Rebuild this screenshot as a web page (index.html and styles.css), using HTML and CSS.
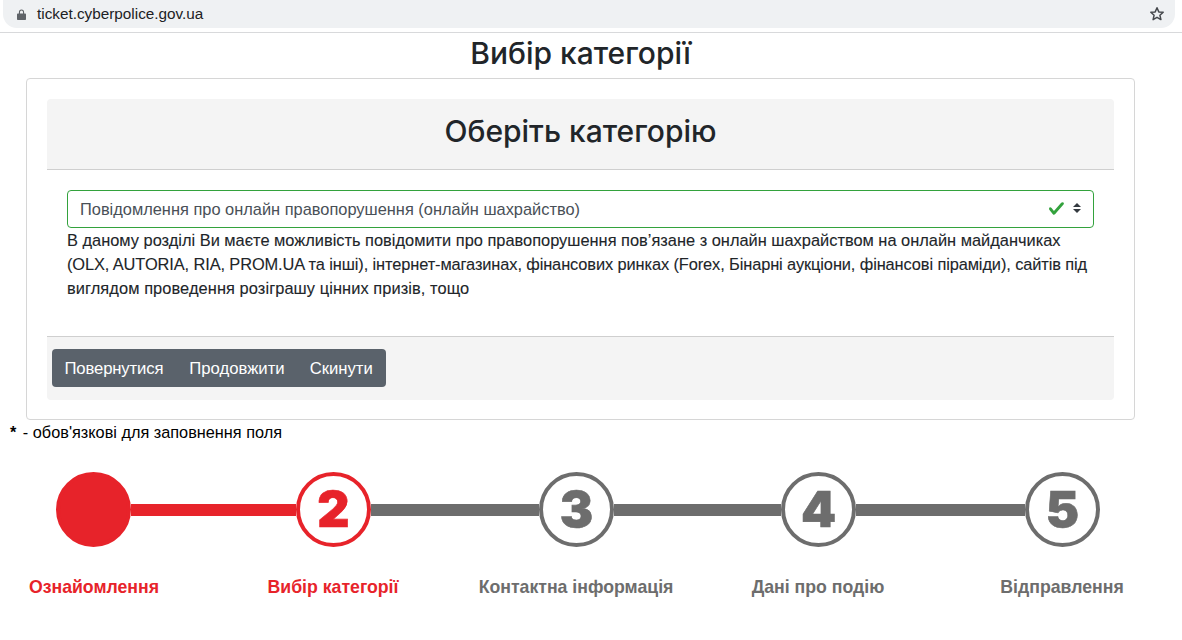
FILE: index.html
```html
<!DOCTYPE html>
<html lang="uk">
<head>
  <meta charset="UTF-8">
  <meta name="viewport" content="width=device-width, initial-scale=1.0">
  <title>Вибір категорії</title>
  <link rel="stylesheet" href="styles.css">
</head>
<body>
  <!-- Browser address bar -->
  <div class="browser-bar">
    <div class="address-pill">
      <svg class="lock-icon" viewBox="0 0 9 11" width="9" height="11">
        <path d="M1.9 4.6V3a2.6 2.6 0 0 1 5.2 0v1.6H8.2a.8.8 0 0 1 .8.8v4.8a.8.8 0 0 1-.8.8H.8a.8.8 0 0 1-.8-.8V5.400a.8.8 0 0 1 .8-.8zM3 4.600h3V3a1.500 1.500 0 0 0-3 0z" fill="#5f6368" fill-rule="evenodd"/>
      </svg>
      <span class="address-text">ticket.cyberpolice.gov.ua</span>
      <svg class="star-icon" viewBox="0 0 16 16" width="16" height="16">
        <path d="M8 1.800l1.800 4.100 4.400.4-3.300 2.900 1 4.400L8 11.300l-3.900 2.300 1-4.400-3.300-2.900 4.400-.4z" fill="none" stroke="#45484c" stroke-width="1.500" stroke-linejoin="round"/>
      </svg>
    </div>
  </div>

  <h2 class="page-title">Вибір категорії</h2>

  <div class="card">
    <div class="card-header">
      <h1>Оберіть категорію</h1>
    </div>
    <div class="card-body">
      <div class="category-select">
        <span class="category-value">Повідомлення про онлайн правопорушення (онлайн шахрайство)</span>
        <svg class="check-icon" viewBox="0 0 8 8" width="17" height="17">
          <path d="M2.3 6.730L.6 4.530c-.4-1.040.46-1.400 1.100-.8l1.100 1.400 3.400-3.800c.6-.63 1.600-.27 1.200.7l-4 4.600c-.43.5-.8.4-1.100.1z" fill="#33a23d"/>
        </svg>
        <svg class="arrows-icon" viewBox="0 0 4 5" width="8" height="10">
          <path d="M2 0L0 2h4zm0 5L0 3h4z" fill="#343a40"/>
        </svg>
      </div>
      <p class="category-text">
        <span class="text-line">В даному розділі Ви маєте можливість повідомити про правопорушення пов’язане з онлайн шахрайством на онлайн майданчиках</span>
        <span class="text-line text-line-tight">(OLX, AUTORIA, RIA, PROM.UA та інші), інтернет-магазинах, фінансових ринках (Forex, Бінарні аукціони, фінансові піраміди), сайтів під</span>
        <span class="text-line text-line-wide">виглядом проведення розіграшу цінних призів, тощо</span>
      </p>
    </div>
    <div class="card-footer">
      <div class="btn-group">
        <button class="btn btn-first">Повернутися</button>
        <button class="btn">Продовжити</button>
        <button class="btn btn-last">Скинути</button>
      </div>
    </div>
  </div>

  <p class="required-note"><b>*</b> - обов'язкові для заповнення поля</p>

  <!-- Progress steps -->
  <div class="steps">
    <div class="step step-done"></div>
    <div class="line line-1 line-active"></div>
    <div class="step step-active">2</div>
    <div class="line line-2"></div>
    <div class="step">3</div>
    <div class="line line-3"></div>
    <div class="step">4</div>
    <div class="line line-4"></div>
    <div class="step">5</div>
  </div>
  <div class="step-labels">
    <div class="label label-active">Ознайомлення</div>
    <div class="label label-active">Вибір категорії</div>
    <div class="label">Контактна інформація</div>
    <div class="label">Дані про подію</div>
    <div class="label">Відправлення</div>
  </div>
</body>
</html>
```

FILE: styles.css
```css
* {
  box-sizing: border-box;
}
body {
  margin: 0;
  font-family: "Liberation Sans", Arial, sans-serif;
  font-size: 16.4px;
  line-height: 24px;
  color: #212529;
  background-color: #fff;
}
.browser-bar {
  height: 33px;
  padding: 0 7px 4px 3px;
  border-bottom: 1px solid #d8d9db;
}
.address-pill {
  display: flex;
  align-items: center;
  height: 28px;
  padding: 0 10px 0 14px;
  background-color: #eff1f3;
  border-radius: 0 0 14px 14px;
}
.lock-icon {
  flex: none;
}
.address-text {
  margin-left: 11px;
  flex: 1;
  font-size: 15.3px;
  color: #202124;
}
.star-icon {
  flex: none;
}
.page-title {
  margin: 0;
  padding-top: 2px;
  height: 45px;
  width: 1161px;
  text-align: center;
  font-family: Inter, "Liberation Sans", sans-serif;
  font-size: 30px;
  line-height: 36px;
  font-weight: 500;
}
.card {
  width: 1109px;
  height: 342px;
  margin-left: 26px;
  padding: 20px;
  border: 1px solid #d6d6d6;
  border-radius: 4px;
}
.card-header {
  height: 71px;
  background-color: #f4f4f4;
  border-bottom: 1px solid #cfcfcf;
  border-radius: 4px 4px 0 0;
  text-align: center;
}
.card-header h1 {
  margin: 0;
  font-family: Inter, "Liberation Sans", sans-serif;
  font-size: 30px;
  line-height: 64px;
  font-weight: 500;
}
.card-body {
  height: 166px;
  padding: 20px;
}
.category-select {
  display: flex;
  align-items: center;
  height: 38px;
  padding: 0 12px;
  border: 1px solid #33a23d;
  border-radius: 4px;
  color: #495057;
}
.category-value {
  flex: 1;
}
.check-icon {
  margin: -2px 8px 0 0;
}
.arrows-icon {
  margin-top: -2px;
}
.category-text {
  margin: 0;
  color: #212529;
  -webkit-text-stroke: 0.1px #212529;
}
.text-line {
  display: block;
  white-space: nowrap;
}
.text-line-tight {
  letter-spacing: -0.11px;
}
.text-line-wide {
  letter-spacing: 0.08px;
}
.card-footer {
  height: 64px;
  padding: 12px 5px;
  background-color: #f4f4f4;
  border-top: 1px solid #cfcfcf;
  border-radius: 0 0 4px 4px;
}
.btn-group {
  display: inline-flex;
  height: 38px;
  background-color: #5a626b;
  border-radius: 4px;
}
.btn {
  padding: 1px 12.5px 0;
  border: none;
  background: none;
  color: #fff;
  font: inherit;
  font-size: 16.7px;
  cursor: pointer;
}
.btn-first {
  letter-spacing: -0.15px;
  margin-right: 1px;
}
.btn-last {
  padding-right: 13.5px;
}
.required-note {
  margin: 0 0 0 10px;
  padding-bottom: 1px;
  font-size: 16.3px;
  line-height: 24px;
  color: #000;
}
.required-note b {
  margin-right: 2px;
}
.steps {
  display: flex;
  align-items: center;
  margin: 27px 0 0 56px;
}
.step {
  flex: none;
  width: 75px;
  height: 75px;
  border: 4px solid #6d6d6d;
  border-radius: 50%;
  text-align: center;
  font-family: Inter, "Liberation Sans", sans-serif;
  font-size: 50px;
  font-weight: 900;
  line-height: 67px;
  color: #6d6d6d;
  -webkit-text-stroke: 0.6px currentColor;
}
.step-done {
  background-color: #e7232a;
  border-color: #e7232a;
}
.step-active {
  border-color: #e7232a;
  color: #e7232a;
}
.line {
  height: 12px;
  background-color: #6d6d6d;
}
.line-active {
  background-color: #e7232a;
}
.line-1 {
  width: 165px;
}
.line-2 {
  width: 168px;
}
.line-3 {
  width: 167px;
}
.line-4 {
  width: 169px;
}
.step-labels {
  display: grid;
  grid-template-columns: 188px 290px 196px 288px 200px;
  margin-top: 28px;
}
.label {
  text-align: center;
  white-space: nowrap;
  font-size: 17.7px;
  font-weight: 700;
  color: #6d6d6d;
}
.label-active {
  color: #e7232a;
}
```
